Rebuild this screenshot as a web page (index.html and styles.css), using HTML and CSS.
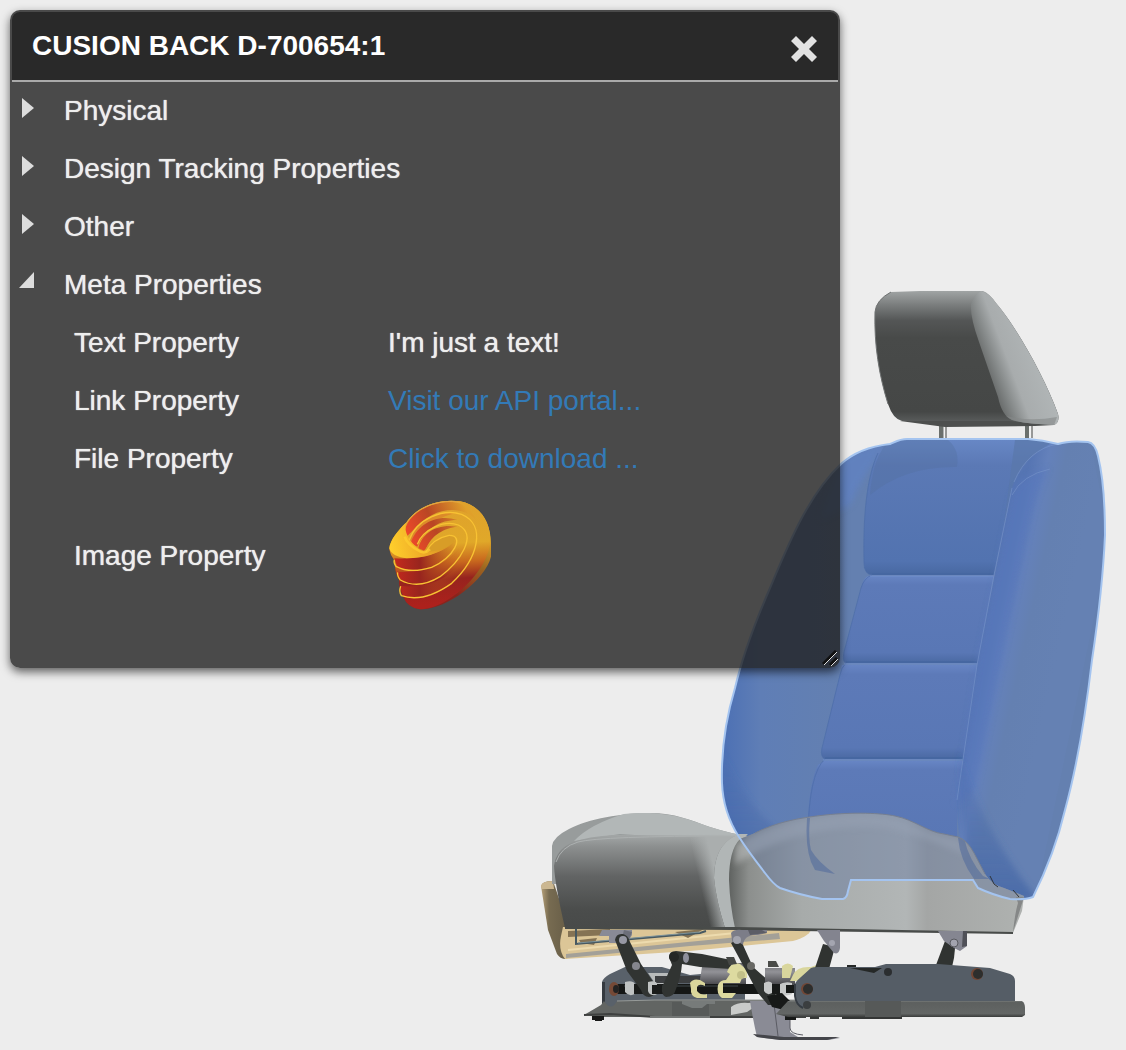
FILE: index.html
```html
<!DOCTYPE html>
<html lang="en">
<head>
<meta charset="utf-8">
<meta name="viewport" content="width=device-width, initial-scale=1">
<title>Seat viewer</title>
<link rel="stylesheet" href="styles.css">
</head>
<body>
<main class="viewer">
  <svg class="scene" viewBox="0 0 1126 1050" preserveAspectRatio="xMaxYMax meet" role="img" aria-label="Car seat model with the back cushion selected">
    <defs>
      <linearGradient id="headFront" x1="0" y1="291" x2="0" y2="425" gradientUnits="userSpaceOnUse">
        <stop offset="0" stop-color="#a0a4a4"/><stop offset=".1" stop-color="#7c7f7f"/><stop offset=".22" stop-color="#545656"/><stop offset=".35" stop-color="#484a49"/><stop offset=".9" stop-color="#454746"/><stop offset="1" stop-color="#606363"/>
      </linearGradient>
      <linearGradient id="headSide" x1="974" y1="370" x2="1040" y2="345" gradientUnits="userSpaceOnUse">
        <stop offset="0" stop-color="#4a4c4b"/><stop offset=".32" stop-color="#868a8a"/><stop offset=".5" stop-color="#a8acad"/><stop offset="1" stop-color="#b2b7b8"/>
      </linearGradient>
      <linearGradient id="wing" x1="722" y1="0" x2="850" y2="0" gradientUnits="userSpaceOnUse">
        <stop offset="0" stop-color="#4c70b4"/><stop offset=".3" stop-color="#5f7eb6"/><stop offset="1" stop-color="#6480b0"/>
      </linearGradient>
      <linearGradient id="panelA" x1="0" y1="438" x2="0" y2="575" gradientUnits="userSpaceOnUse">
        <stop offset="0" stop-color="#6888c6"/><stop offset=".2" stop-color="#5b79b5"/><stop offset=".9" stop-color="#5273b0"/><stop offset="1" stop-color="#4868a1"/>
      </linearGradient>
      <linearGradient id="panelB" x1="0" y1="0" x2="0" y2="1">
        <stop offset="0" stop-color="#6785c4"/><stop offset=".1" stop-color="#5d7ab8"/><stop offset=".88" stop-color="#5977b5"/><stop offset="1" stop-color="#4a69a2"/>
      </linearGradient>
      <linearGradient id="bolster" x1="990" y1="640" x2="1058" y2="655" gradientUnits="userSpaceOnUse">
        <stop offset="0" stop-color="#5675b3"/><stop offset=".25" stop-color="#6481bb"/><stop offset=".5" stop-color="#6480b1"/><stop offset="1" stop-color="#6581b3"/>
      </linearGradient>
      <linearGradient id="shade" x1="0" y1="740" x2="0" y2="900" gradientUnits="userSpaceOnUse">
        <stop offset="0" stop-color="#4466a6" stop-opacity="0"/><stop offset="1" stop-color="#4466a6" stop-opacity=".75"/>
      </linearGradient>
      <linearGradient id="seatFront" x1="0" y1="834" x2="0" y2="928" gradientUnits="userSpaceOnUse">
        <stop offset="0" stop-color="#a5a9a9"/><stop offset=".13" stop-color="#8d9090"/><stop offset=".45" stop-color="#626464"/><stop offset=".8" stop-color="#4b4d4c"/><stop offset="1" stop-color="#484a49"/>
      </linearGradient>
      <linearGradient id="seatEdge" x1="700" y1="884" x2="717" y2="880" gradientUnits="userSpaceOnUse">
        <stop offset="0" stop-color="#a9adad" stop-opacity="0"/><stop offset="1" stop-color="#aaaeae"/>
      </linearGradient>
      <linearGradient id="seatSide" x1="728" y1="0" x2="1025" y2="0" gradientUnits="userSpaceOnUse">
        <stop offset="0" stop-color="#5d605e"/><stop offset=".07" stop-color="#8c8f8d"/><stop offset=".25" stop-color="#a7abaa"/><stop offset=".6" stop-color="#b2b6b6"/><stop offset=".67" stop-color="#a4a6a5"/><stop offset="1" stop-color="#afb2b0"/>
      </linearGradient>
      <linearGradient id="beigeEnd" x1="541" y1="0" x2="568" y2="0" gradientUnits="userSpaceOnUse">
        <stop offset="0" stop-color="#b8a27a"/><stop offset=".3" stop-color="#776b51"/><stop offset="1" stop-color="#675d47"/>
      </linearGradient>
      <linearGradient id="motor" x1="0" y1="962" x2="0" y2="984" gradientUnits="userSpaceOnUse">
        <stop offset="0" stop-color="#626266"/><stop offset=".45" stop-color="#929297"/><stop offset="1" stop-color="#4c4c50"/>
      </linearGradient>
      <linearGradient id="rail" x1="0" y1="1000" x2="0" y2="1017" gradientUnits="userSpaceOnUse">
        <stop offset="0" stop-color="#858987"/><stop offset=".15" stop-color="#5d605f"/><stop offset=".8" stop-color="#636665"/><stop offset="1" stop-color="#393b3a"/>
      </linearGradient>
      <filter id="soft" x="-20%" y="-20%" width="140%" height="140%"><feGaussianBlur stdDeviation="3"/></filter>
      <path id="backShape" d="M722 783 C721 748 726 718 735 688 C742 658 757 618 770 588 C788 545 808 495 841 464 C855 451 873 446 890 444 C897 441 900 439 907 439 H1028 C1041 440 1050 442 1058 444 C1067 441 1078 441 1088 442 Q1095 443 1098 456 C1104 480 1105 510 1105 535 C1103 580 1098 620 1092 660 C1085 720 1076 770 1065 810 C1056 848 1044 875 1033 897 Q1025 900 1010 899 Q993 895 978 888 L973 880 H851 L848 891 Q847 898 843 899 H822 Q800 895 780 888 Q774 885 765 873 Q748 851 739 837 Q723 812 722 783Z"/>
      <path id="cushionShape" d="M729 880 Q729 850 740 839 L755 833 C777 822 798 818 825 815 C853 812 882 813 895 816 C915 820 927 832 944 834 L958 837 Q967 840 974 853 L985 874 Q992 885 1004 888 L1024 896 L1022 911 L1013 933 L735 928 Q730 906 729 880Z"/>
      <clipPath id="backClip"><use href="#backShape"/></clipPath>
      <clipPath id="cushionClip"><use href="#cushionShape"/></clipPath>
    </defs>

    <!-- head restraint -->
    <path d="M939 424 H944 V440 H939Z M1025 424 H1029 V440 H1025Z" fill="#6a6f6c"/>
    <path d="M944 424 V440 M1030 424 V440" stroke="#f5f5f5" stroke-width="1"/>
    <path d="M946 426 V440 M1032 424 V438" stroke="#414341" stroke-width="1"/>
    <path d="M900 421 L945 427 L1035 426 L1054 425 L1050 419Z" fill="#4d4f4e"/>
    <path d="M891 292 L920 291 H958 L983 291 Q989 293 996 303 C1015 325 1045 377 1058 414 Q1060 422 1054 425 L1010 421 L902 421 Q893 419 888 404 C879 375 874 345 875 312 Q876 300 891 292Z" fill="url(#headFront)"/>
    <path d="M891 292 Q876 300 875 312 C874 345 879 375 888 404" fill="none" stroke="#6e7171" stroke-width="1"/>
    <path d="M981 291 Q989 293 996 303 C1015 325 1045 377 1058 414 Q1060 423 1054 425 Q1025 424 1012 420 Q1002 416 998 397 L979 342 Q970 317 971 304 Q974 295 981 291Z" fill="url(#headSide)"/>
    <path d="M1006 416 Q1030 422 1057 417 L1054 425 Q1025 424 1012 420Z" fill="#858988" opacity=".6"/>

    <!-- selected back cushion -->
    <use href="#backShape" fill="url(#wing)"/>
    <g clip-path="url(#backClip)">
      <path d="M841 460 Q860 445 890 443 Q865 470 850 505 L820 520Z" fill="#6182c5" opacity=".7" filter="url(#soft)"/>
      <path d="M890 443 L907 437 H1060 L1010 500 L994 575 H872 Q864 574 864 563 C863 520 866 478 878 453Z" fill="url(#panelA)"/>
      <path d="M870 495 Q905 466 957 467 Q960 450 948 440 H890 Q873 455 870 495Z" fill="#526f9f" opacity=".35"/>
      <path d="M1015 440 H1058 Q1025 455 1014 482 L1003 530Z" fill="#5a77aa" opacity=".7"/>
      <path d="M868 576 H994 L978 663 H846 Q842 662 844 652 L861 588 Q864 577 868 576Z" fill="url(#panelB)"/>
      <path d="M842 665 H978 L963 759 H825 Q820 757 822 748Z" fill="url(#panelB)"/>
      <path d="M824 761 H963 L957 800 V850 H808 Q806 790 818 765Z" fill="url(#panelB)"/>
      <path d="M878 453 C866 478 863 520 864 563 Q864 574 872 575 Q864 578 861 588 L844 652 Q842 662 846 663 Q841 668 840 675 L822 748 Q820 757 825 759 Q809 773 808 835" fill="none" stroke="#4d6da8" stroke-width="1" opacity=".7"/>
      <path d="M872 574 H994 M846 662 H977 M825 758 H963" stroke="#4667a1" stroke-width="2"/>
      <path d="M870 576 H993 M844 664 H977 M823 760 H962" stroke="#718fcc" stroke-width="1"/>
      <path d="M1012 488 Q1028 449 1058 444 L1090 440 L1110 540 L1035 900 H985 Q955 850 957 800 L977 665Z" fill="url(#bolster)"/>
      <path d="M1012 495 Q1020 475 1048 468 Q1034 495 1024 550 L975 790 L956 805 L977 665 L1002 545Z" fill="#5878bd" opacity=".6" filter="url(#soft)"/>
      <path d="M1012 495 Q1022 475 1050 469 M1014 482 Q1028 449 1058 444 M1012 488 L994 575 L977 665 L957 800" fill="none" stroke="#7894ca" stroke-width="1" opacity=".6"/>
      <path d="M720 740 Q745 815 800 845 V900 H720Z M957 740 Q975 820 1038 900 H970Z" fill="url(#shade)" filter="url(#soft)"/>
    </g>

    <!-- beige base pan -->
    <path d="M541 886 Q542 881 553 881 L568 925 V958 Q562 961 557 954 L548 930Z" fill="url(#beigeEnd)"/>
    <path d="M541 886 Q542 881 553 881 L554 889 H542Z" fill="#cbb791"/>
    <path d="M563 927 H812 Q811 936 793 941 L690 951 L565 959 Q558 950 561 936Z" fill="#dcc697"/>
    <path d="M566 954 L779 933 L780 939 L690 946 L566 958Z" fill="#a3a098"/>
    <path d="M568 950 L745 932" stroke="#eddbae" stroke-width="2"/>
    <path d="M579 940 L597 938 L594 945 L581 943Z M675 932 L704 929 L688 938Z M568 931 L610 929 V935 L568 937Z" fill="#857354"/>
    <path d="M576 928 V944 L700 933 L706 931" fill="none" stroke="#475961" stroke-width="2"/>
    <path d="M578 943 L700 932" stroke="#7c9299" stroke-width="1"/>

    <!-- seat cushion -->
    <path d="M552 884 V846 Q553 837 569 829 C588 819 622 813 650 813 C675 813 690 820 710 827 Q732 834 748 836 L740 848 L557 884Z" fill="#989c9c"/>
    <path d="M574 841 Q590 824 624 814 C665 810 685 818 710 827 Q732 834 748 836 L738 842 L620 834Z" fill="#b2b7b7"/>
    <path d="M612 836 L740 834 H748 L736 845 V928 H722Z" fill="#b1b6b6"/>
    <path d="M554 866 Q556 850 571 843 Q588 836 615 835 L735 836 Q714 846 714 878 Q716 900 725 928 H565 Q555 885 554 866Z" fill="url(#seatFront)"/>
    <path d="M690 836 H735 Q714 846 714 878 Q716 900 725 928 H705 Q697 880 690 836Z" fill="url(#seatEdge)"/>
    <path d="M556 862 Q561 847 578 842 Q600 836 735 836" fill="none" stroke="#adb1b1" stroke-width="1"/>
    <use href="#cushionShape" fill="url(#seatSide)"/>
    <g clip-path="url(#cushionClip)">
      <path d="M735 845 C777 822 798 820 830 816 C860 813 885 814 900 820 C920 828 932 836 960 840 L967 856 Q900 825 865 827 Q790 828 735 865Z" fill="#c1c4c4" opacity=".55" filter="url(#soft)"/>
      <use href="#backShape" fill="#586d9b" fill-opacity=".4"/>
      <path d="M807 818 Q805 845 811 862 L815 870 L835 874 Q818 862 811 850 Q808 838 810 818Z M958 838 H964 Q969 860 983 876 L990 879 H974 Q960 860 958 838Z" fill="#536c9c" opacity=".6"/>
    </g>
    <path d="M755 833 C777 822 798 818 825 815 C853 812 882 813 895 816 C915 820 927 832 944 834 L958 837 Q967 840 974 853 L985 874" fill="none" stroke="#767f90" stroke-width="1"/>
    <path d="M990 876 L994 884 L998 887 M1013 890 L1019 897" fill="none" stroke="#30343a" stroke-width="1"/>
    <path d="M1016 897 H1024 L1013 932 Q1015 913 1018 903Z" fill="#858787"/>
    <use href="#backShape" fill="none" stroke="#a4c4f0" stroke-width="2"/>
    <path d="M565 927 H735 L1013 932 V934 L735 930 L565 929Z" fill="#484b49"/>

    <!-- left mounting plate and cross tube -->
    <path d="M602 982 Q603 978 610 974 L625 967 H662 L690 975 L745 970 V1008 H602Z" fill="#59616a"/>
    <path d="M602 982 V1004 L605 1007 V982Z" fill="#353a40"/>
    <path d="M584 1015 L601 1005 L604 1001 Q611 1012 617 1001 L655 1000 H806 V1017 H598Z" fill="#626563"/>
    <path d="M617 1001 L655 1000 H806" fill="none" stroke="#979b99" stroke-width="1"/>
    <path d="M584 1015 L610 1014 L655 1017 H806" fill="none" stroke="#3e403f" stroke-width="2"/>
    <path d="M592 1016 H604 V1020 H592Z M595 1020 H602 V1021 H595Z" fill="#181918"/>
    <path d="M672 1002 H709 V1017 H672Z" fill="#575a59"/>
    <path d="M650 1016 H710 V1018 H650Z" fill="#747776"/>
    <path d="M731 1007 Q738 1002 748 1003 L762 1002 L747 1012 L731 1015Z" fill="#c9cbc9"/>
    <path d="M682 1001 H715 V1004 H707 L702 1008 H692 L682 1004Z" fill="#777b7a"/>
    <path d="M648 973 H668 V985 H656Z" fill="#b8bbbb"/>
    <path d="M655 976 H745 V983 H655Z" fill="#3c3e40"/>
    <path d="M702 967 Q706 962 716 963 H746 V985 H699Z" fill="url(#motor)"/>
    <path d="M612 984 H790 V994 H612Z" fill="#151716"/>
    <path d="M624 986 H738" stroke="#41484a" stroke-width="1"/>
    <ellipse cx="614" cy="989" rx="5" ry="7" fill="#754936"/>
    <ellipse cx="616" cy="989" rx="3" ry="4" fill="#222"/>
    <path d="M625 982 Q633 980 635 984 V994 Q629 997 625 992Z M647 982 Q655 980 657 984 V994 Q650 997 647 990Z" fill="#bfc2c2"/>
    <path d="M634 984 H648 V994 H634Z M656 984 H662 V994 H656Z" fill="#1a1c1b"/>

    <!-- front links -->
    <path d="M602 930 H632 V935 L627 943 H609 V936 H599Z" fill="#898a96"/>
    <path d="M624 930 L632 932 L628 942 L622 938Z" fill="#6c6e79"/>
    <path d="M615 940 Q616 933 623 934 Q628 935 630 942 L641 964 L654 983 Q658 996 649 997 Q643 997 641 990 L627 971Z" fill="#313432"/>
    <path d="M648 982 Q656 980 657 984 V994 Q650 997 648 991Z" fill="#bfc2c2"/>
    <path d="M652 985 H662 V994 H652Z" fill="#1a1c1b"/>
    <circle cx="623" cy="940" r="4" fill="#9798a4"/>
    <circle cx="636" cy="966" r="4" fill="#85868e"/>
    <path d="M669 957 Q669 951 676 951 L702 954 L731 960 V969 L700 967 L682 964 Q681 977 676 989 Q674 997 666 997 Q661 995 662 987 L672 965Z" fill="#313432"/>
    <circle cx="674" cy="957" r="5" fill="#252725"/>
    <ellipse cx="686" cy="958" rx="3" ry="5" fill="#8e8f9a"/>

    <!-- cream brackets -->
    <path d="M690 983 Q693 978 700 980 L705 983 V986 Q699 983 697 987 V991 Q701 996 707 994 V998 H697 Q690 996 691 989Z" fill="#d9d69b"/>
    <path d="M727 972 Q731 961 740 964 L747 970 V978 H742 L740 983 H723 V993 H736 L732 998 H722 Q716 994 718 985 Q720 980 726 980 L730 974Z" fill="#dddaa0"/>
    <path d="M726 957 H734 L737 964 L729 965Z" fill="#454745"/>
    <circle cx="741" cy="975" r="4" fill="#c2bf88"/>

    <!-- centre footplate -->
    <path d="M750 1001 H790 V1032 L798 1037 L840 1038 L828 1040 H781 L757 1037 Q753 1020 750 1001Z" fill="#8a8b95"/>
    <path d="M790 1018 V1028 Q790 1034 803 1035 V1038 L842 1037 V1030 H830 V1018Z" fill="#ededed"/>
    <path d="M774 1004 L778 1036 M790 1018 V1028 Q790 1034 803 1035" fill="none" stroke="#5a5b63" stroke-width="1"/>
    <path d="M753 1034 L784 1037 L840 1037 L827 1040 H780 L757 1037Z" fill="#44454a"/>

    <!-- rear links -->
    <path d="M731 933 Q734 929 742 930 L767 930 V933 L758 935 Q744 934 743 945 L733 947Z" fill="#7c7d88"/>
    <path d="M748 930 H762 L767 933 L750 935Z" fill="#5c5d66"/>
    <path d="M731 943 Q736 939 743 945 L753 967 L769 981 L780 1005 H768 L758 993Z" fill="#303331"/>
    <circle cx="737" cy="940" r="4" fill="#a3a4ae"/>
    <circle cx="751" cy="966" r="4" fill="#686864"/>
    <path d="M765 968 H795 V985 H765Z" fill="url(#motor)"/>
    <path d="M768 961 H776 L779 967 H768Z" fill="#4a4b48"/>
    <path d="M782 966 Q788 961 793 966 L790 978 H782Z M793 975 Q797 966 811 967 L822 963 V981 H790Z" fill="#d9d69d"/>
    <path d="M815 968 L823 944 L835 947 L829 969Z" fill="#303331"/>
    <path d="M817 930 H840 V948 Q839 955 834 953 L824 941Z" fill="#83848f"/>
    <circle cx="832" cy="943" r="3" fill="#a4a5b0"/>
    <path d="M936 965 L945 941 L956 939 L954 958 L952 967Z" fill="#303331"/>
    <path d="M938 931 H967 V946 L960 951 L954 948 L944 941Z" fill="#858691"/>
    <path d="M963 931 H967 V946 L962 947Z" fill="#505158"/>
    <circle cx="954" cy="943" r="4" fill="#a2a3ae" stroke="#595a60"/>
    <path d="M764 983 Q769 980 772 983 V993 Q767 996 764 991Z M778 985 Q785 981 792 983 V994 Q784 998 778 991Z" fill="#c6c8c8"/>
    <path d="M772 984 H780 V994 H772Z M786 985 H796 V993 H786Z M767 996 L782 993 L795 1006 L784 1010 L772 1007Z M785 1016 H796 V1020 H785Z" fill="#171918"/>

    <!-- right rail and side plate -->
    <path d="M788 1001 H1022 Q1025 1003 1025 1008 V1015 L1022 1017 H788 L776 1014Z" fill="url(#rail)"/>
    <path d="M865 1001 H901 V1018 H865Z" fill="#565958"/>
    <path d="M842 1017 H902 V1019 H842Z M810 1017 H819 V1019 H810Z" fill="#343635"/>
    <path d="M795 984 Q796 981 801 977 L811 968 Q813 967 818 967 H875 L886 964 H938 L990 968 L1010 974 Q1015 976 1015 981 V1001 H813 Q807 1000 803 1008 Q796 1005 795 996Z" fill="#555d66"/>
    <path d="M795 984 V996 Q796 1005 803 1008" fill="none" stroke="#353b42" stroke-width="2"/>
    <circle cx="807" cy="1005" r="4" fill="#3b3e40"/>
    <path d="M850 968 H882 L874 973Z M847 965 H856 V967 H847Z" fill="#252827"/>
    <circle cx="807" cy="989" r="6" fill="#724634"/><circle cx="808" cy="989" r="5" fill="#2d2e2d"/>
    <circle cx="888" cy="972" r="4" fill="#2b2e30"/>
    <circle cx="977" cy="974" r="6" fill="#724634"/><circle cx="978" cy="974" r="5" fill="#2d2e2d"/>
  </svg>

  <section class="panel" aria-labelledby="panel-title">
    <header class="panel-header">
      <h1 class="panel-title" id="panel-title">CUSION BACK D-700654:1</h1>
      <button class="close" type="button" aria-label="Close">
        <svg viewBox="0 0 28 28" width="28" height="28" aria-hidden="true"><path d="M6 1L14 9L22 1L27 6L19 14L27 22L22 27L14 19L6 27L1 22L9 14L1 6Z" fill="#e2e2e2"/></svg>
      </button>
    </header>
    <div class="groups">
      <details class="group"><summary class="group-name"><svg class="arrow" viewBox="0 0 18 22" aria-hidden="true"><path d="M4 1L16 11L4 21Z"/></svg>Physical</summary></details>
      <details class="group"><summary class="group-name"><svg class="arrow" viewBox="0 0 18 22" aria-hidden="true"><path d="M4 1L16 11L4 21Z"/></svg>Design Tracking Properties</summary></details>
      <details class="group"><summary class="group-name"><svg class="arrow" viewBox="0 0 18 22" aria-hidden="true"><path d="M4 1L16 11L4 21Z"/></svg>Other</summary></details>
      <details class="group" open><summary class="group-name"><svg class="arrow" viewBox="0 0 18 22" aria-hidden="true"><path d="M16 1V17H1Z"/></svg>Meta Properties</summary>
        <table class="properties">
          <tr><th scope="row">Text Property</th><td>I'm just a text!</td></tr>
          <tr><th scope="row">Link Property</th><td><a href="#portal">Visit our API portal...</a></td></tr>
          <tr><th scope="row">File Property</th><td><a href="#download">Click to download ...</a></td></tr>
          <tr><th scope="row">Image Property</th><td>
            <svg class="logo" viewBox="54 60 336 336" role="img" aria-label="Spiral logo">
              <defs>
                <linearGradient id="gold" x1="240" y1="60" x2="260" y2="370" gradientUnits="userSpaceOnUse"><stop offset="0" stop-color="#dfa12c"/><stop offset=".42" stop-color="#e0a829"/><stop offset=".6" stop-color="#c9691e"/><stop offset=".76" stop-color="#96231e"/><stop offset="1" stop-color="#ad211c"/></linearGradient>
                <linearGradient id="edge" x1="360" y1="160" x2="270" y2="350" gradientUnits="userSpaceOnUse"><stop offset="0" stop-color="#e8b02a"/><stop offset=".5" stop-color="#9b6420"/><stop offset="1" stop-color="#8a231c"/></linearGradient>
                <linearGradient id="fire" x1="110" y1="170" x2="290" y2="90" gradientUnits="userSpaceOnUse"><stop offset="0" stop-color="#f0492a"/><stop offset=".45" stop-color="#b94624"/><stop offset="1" stop-color="#e0a02a"/></linearGradient>
                <linearGradient id="lip" x1="60" y1="220" x2="260" y2="180" gradientUnits="userSpaceOnUse"><stop offset="0" stop-color="#ffd02c"/><stop offset=".45" stop-color="#f0ad28"/><stop offset="1" stop-color="#cf8b24"/></linearGradient>
                <linearGradient id="wall" x1="70" y1="0" x2="270" y2="0" gradientUnits="userSpaceOnUse"><stop offset="0" stop-color="#c6291d"/><stop offset=".4" stop-color="#98251e"/><stop offset="1" stop-color="#c4651e" stop-opacity="0"/></linearGradient>
              </defs>
              <path d="M58 205C60 180 85 150 108 128C145 75 215 55 270 64C330 75 362 125 363 190V230C345 300 230 390 150 388Q112 382 100 350Q88 330 87 300Q75 280 73 240Q60 225 58 205Z" fill="url(#edge)"/>
              <path d="M58 205C60 180 85 150 108 128C145 75 215 55 270 64C330 75 362 125 361 185C355 270 240 385 150 388Q112 382 100 350Q88 330 87 300Q75 280 73 240Q60 225 58 205Z" fill="url(#gold)"/>
              <path d="M104 175C95 110 175 65 245 65Q295 70 318 120C280 75 190 75 125 155Z" fill="url(#fire)"/>
              <path d="M116 185C140 120 210 90 262 100C210 105 170 140 145 190Z" fill="#dc8a2a"/>
              <path d="M122 190C140 130 205 100 262 120C210 120 165 145 142 200Z" fill="url(#fire)"/>
              <path d="M145 205C155 160 200 130 262 140C225 145 185 160 165 213Z" fill="url(#fire)"/>
              <path d="M73 235Q155 240 210 213Q240 198 258 178Q260 210 220 242Q160 280 83 265Z M80 275Q150 280 205 255Q260 225 282 180Q280 240 220 285Q150 325 90 300Z M90 318Q170 325 225 290Q300 240 318 170Q315 240 250 305Q170 370 100 350Z" fill="url(#wall)"/>
              <path d="M58 205C60 180 85 150 108 128Q98 170 150 210Q165 217 180 214Q220 205 250 190Q190 235 110 235Q65 230 58 205Z" fill="url(#lip)"/>
              <path d="M160 215Q180 180 230 168Q265 162 252 185Q225 215 160 215Z" fill="#d89d27"/>
              <g fill="none" stroke="#f8c233" stroke-width="4">
                <path d="M108 132C140 75 215 58 270 67" stroke="#e4a545" stroke-width="3"/>
                <path d="M118 180C140 115 220 85 275 103C350 135 325 235 245 310Q160 370 94 347Q86 335 92 319"/>
                <path d="M142 193C160 145 225 120 265 135C325 165 270 245 210 290Q145 330 91 300Q81 288 83 277"/>
                <path d="M167 216Q190 175 237 166C287 165 250 235 185 262Q120 282 78 259Q70 248 73 239"/>
              </g>
              <path d="M104 170Q112 196 150 214Q165 222 180 208" fill="none" stroke="#ffce31" stroke-width="8" opacity=".7"/>
            </svg>
          </td></tr>
        </table>
      </details>
    </div>
    <svg class="grip" viewBox="0 0 18 18" aria-hidden="true"><path d="M1 14L14 1M8 15L15 8" stroke="#111" stroke-width="3"/><path d="M2 15L15 2M9 16L16 9" stroke="#ddd" stroke-width="1"/></svg>
  </section>
</main>
</body>
</html>
```
FILE: styles.css
```css
* {
  box-sizing: border-box;
}

body {
  margin: 0;
  background: #ededed;
  font-family: "Liberation Sans", Arial, Helvetica, sans-serif;
  font-size: 28px;
  color: #eee;
}

.viewer {
  position: relative;
  min-height: 100vh;
  padding: 10px;
  overflow: hidden;
}

/* The model canvas lies behind the floating panel. */
.scene {
  position: absolute;
  inset: 0;
  width: 100%;
  height: 100%;
}

.panel {
  position: relative;
  max-width: 830px;
  padding-bottom: 42px;
  border: 2px solid transparent;
  border-radius: 10px;
  background: rgba(33, 33, 33, 0.8);
  background-clip: border-box;
  box-shadow: 0 4px 10px rgba(0, 0, 0, 0.6);
}

.panel-header {
  display: flex;
  align-items: center;
  justify-content: space-between;
  height: 70px;
  padding: 0 20px;
  border-bottom: 2px solid #aaa;
  border-radius: 8px 8px 0 0;
  background: #292929;
}

.panel-title {
  margin: 0;
  font-size: 28px;
  line-height: 32px;
  color: #fff;
}

.close {
  display: flex;
  margin-top: 6px;
  padding: 0;
  border: 0;
  background: none;
  cursor: pointer;
}

.group-name {
  display: flex;
  align-items: center;
  height: 58px;
  padding-left: 6px;
  list-style: none;
  text-shadow: 0 0 1px #eee;
  cursor: pointer;
}

.group-name::-webkit-details-marker {
  display: none;
}

.arrow {
  width: 18px;
  height: 22px;
  margin-right: 28px;
  margin-bottom: 6px;
  fill: #ddd;
}

.properties {
  width: 100%;
  border-collapse: collapse;
  table-layout: fixed;
}

.properties th,
.properties td {
  height: 58px;
  padding: 0;
  text-align: left;
  vertical-align: middle;
  font-weight: normal;
}

.properties th {
  width: 376px;
  padding-left: 62px;
  text-shadow: 0 0 1px #eee;
}

.properties td {
  text-shadow: 0 0 1px currentColor;
}

.properties a {
  color: #337ab7;
  text-decoration: none;
  text-shadow: none;
}

.logo {
  display: block;
  width: 112px;
  height: 112px;
  margin: 12px 0;
}

.grip {
  position: absolute;
  right: -2px;
  bottom: -2px;
  width: 18px;
  height: 18px;
}
```
